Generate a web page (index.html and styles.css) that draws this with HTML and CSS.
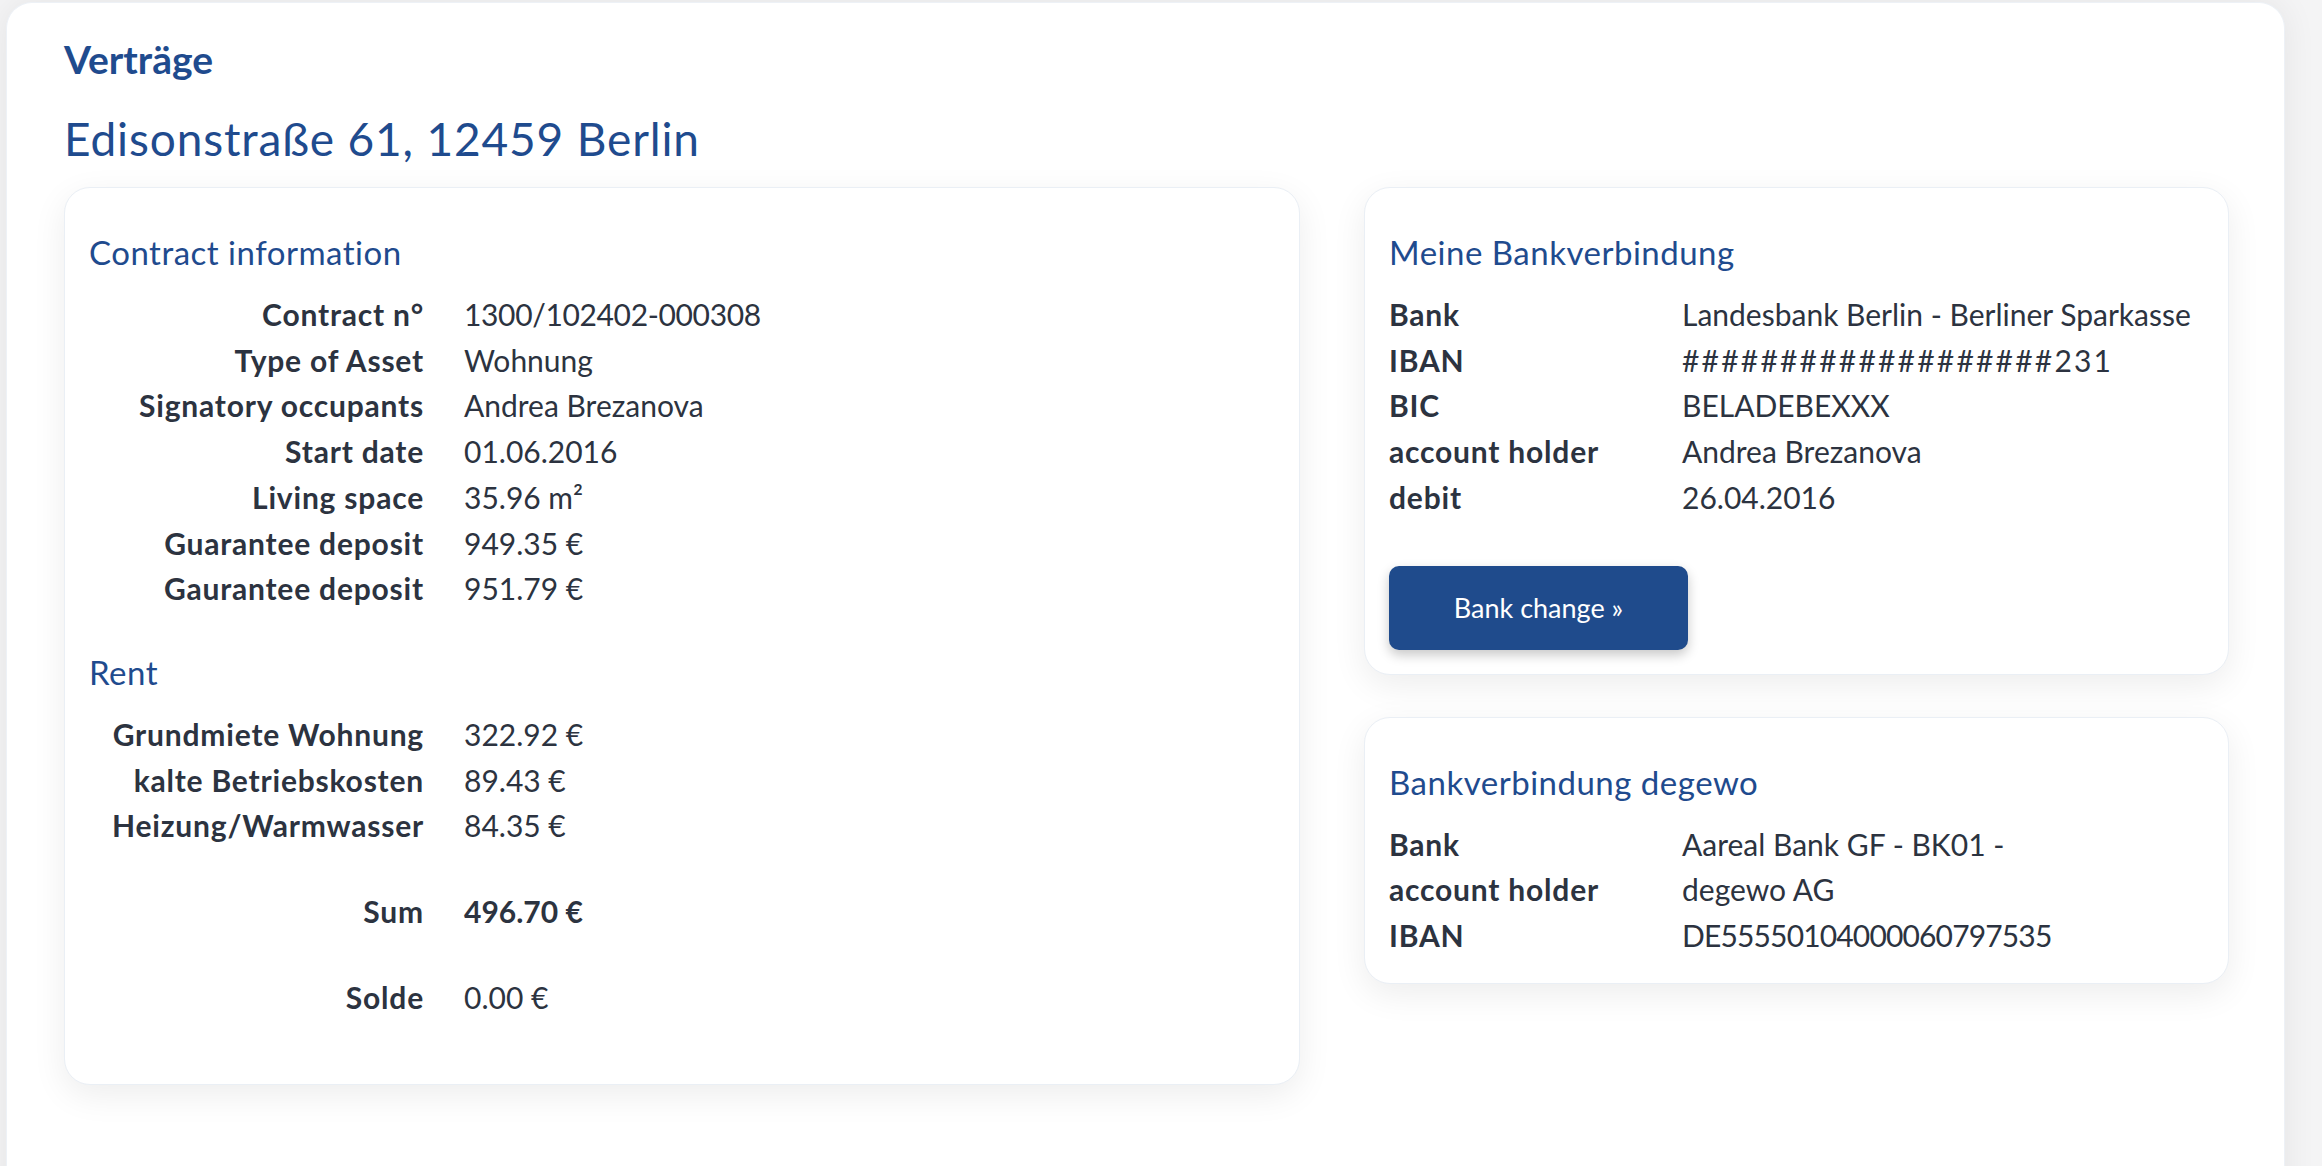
FILE: index.html
```html
<!DOCTYPE html>
<html lang="de">
<head>
<meta charset="utf-8">
<title>Verträge</title>
<link rel="stylesheet" href="styles.css">
</head>
<body>
<div class="page">
  <main class="sheet">
    <h2 class="section-kicker">Verträge</h2>
    <h1 class="address">Edisonstraße 61, 12459 Berlin</h1>
    <div class="layout">
      <section class="card">
        <h3 class="card-title">Contract information</h3>
        <dl class="facts facts-right">
          <dt>Contract n°</dt><dd class="digits">1300/102402-000308</dd>
          <dt>Type of Asset</dt><dd>Wohnung</dd>
          <dt>Signatory occupants</dt><dd>Andrea Brezanova</dd>
          <dt>Start date</dt><dd>01.06.2016</dd>
          <dt>Living space</dt><dd>35.96 m²</dd>
          <dt>Guarantee deposit</dt><dd>949.35 €</dd>
          <dt>Gaurantee deposit</dt><dd>951.79 €</dd>
        </dl>
        <h3 class="card-title spaced">Rent</h3>
        <dl class="facts facts-right">
          <dt>Grundmiete Wohnung</dt><dd>322.92 €</dd>
          <dt>kalte Betriebskosten</dt><dd>89.43 €</dd>
          <dt>Heizung/Warmwasser</dt><dd>84.35 €</dd>
        </dl>
        <dl class="facts facts-right">
          <dt>Sum</dt><dd class="strong">496.70 €</dd>
        </dl>
        <dl class="facts facts-right">
          <dt>Solde</dt><dd>0.00 €</dd>
        </dl>
      </section>
      <div class="side">
        <section class="card card-tight">
          <h3 class="card-title">Meine Bankverbindung</h3>
          <dl class="facts facts-left">
            <dt>Bank</dt><dd>Landesbank Berlin - Berliner Sparkasse</dd>
            <dt>IBAN</dt><dd class="masked">###################231</dd>
            <dt>BIC</dt><dd>BELADEBEXXX</dd>
            <dt>account holder</dt><dd>Andrea Brezanova</dd>
            <dt>debit</dt><dd>26.04.2016</dd>
          </dl>
          <button class="btn-primary" type="button">Bank change »</button>
        </section>
        <section class="card card-tight">
          <h3 class="card-title">Bankverbindung degewo</h3>
          <dl class="facts facts-left">
            <dt>Bank</dt><dd>Aareal Bank GF - BK01 -</dd>
            <dt>account holder</dt><dd>degewo AG</dd>
            <dt>IBAN</dt><dd class="digits tight">DE55550104000060797535</dd>
          </dl>
        </section>
      </div>
    </div>
  </main>
</div>
</body>
</html>
```

FILE: styles.css
```css
* { box-sizing: border-box; }

html, body {
  margin: 0;
  padding: 0;
  background: #f4f4f5;
}

body {
  font-family: "Lato", "Open Sans", sans-serif;
  color: #2c3340;
  overflow: hidden;
}

.page {
  padding: 2px 37px 0 6px;
}

.sheet {
  background: #ffffff;
  border: 1px solid #edf1f6;
  border-bottom: none;
  border-radius: 26px 26px 0 0;
  box-shadow: 0 0 34px rgba(0, 0, 0, 0.07);
  min-height: 1300px;
  padding: 34px 55px 0 57px;
}

.section-kicker {
  margin: 0;
  font-size: 39px;
  line-height: 44px;
  font-weight: 700;
  color: #1f4b8e;
}

.address {
  margin: 31px 0 22px;
  font-size: 46px;
  line-height: 53px;
  font-weight: 400;
  letter-spacing: 0.85px;
  color: #1f4b8e;
}

.layout {
  display: grid;
  grid-template-columns: 1236fr 865fr;
  column-gap: 64px;
  align-items: start;
}

.side {
  display: flex;
  flex-direction: column;
  gap: 42px;
}

.card {
  background: #ffffff;
  border: 1px solid #eaeff5;
  border-radius: 26px;
  box-shadow: 0 10px 34px rgba(0, 0, 0, 0.075);
  padding: 24px 24px 24px 24px;
}

.card-title {
  margin: 20px 0 20px;
  font-size: 33px;
  line-height: 40px;
  font-weight: 400;
  letter-spacing: 0.5px;
  color: #1f4b8e;
}

.card-title.spaced {
  margin-top: 40px;
}

.facts {
  display: grid;
  margin: 0 0 40px;
  font-size: 30px;
  line-height: 45.71px;
}

.facts dt {
  font-weight: 700;
  letter-spacing: 0.8px;
  white-space: nowrap;
}

.facts dd {
  margin: 0;
  white-space: nowrap;
}

.facts dd.masked {
  letter-spacing: 2.2px;
}

.facts dd.digits {
  letter-spacing: -0.35px;
}

.facts dd.digits.tight {
  letter-spacing: -0.85px;
}

.facts-right {
  grid-template-columns: 335px 1fr;
  column-gap: 40px;
}

.facts-right dt {
  text-align: right;
}

.facts-left {
  grid-template-columns: 293px 1fr;
}

.card-tight .facts {
  margin-bottom: 0;
}

.strong {
  font-weight: 700;
}

.btn-primary {
  display: block;
  margin-top: 45px;
  width: 299px;
  height: 84px;
  border: none;
  border-radius: 10px;
  background: #1f4b8c;
  color: #ffffff;
  font-family: "Lato", "Open Sans", sans-serif;
  font-size: 27px;
  box-shadow: 0 5px 12px rgba(0, 0, 0, 0.22);
  cursor: pointer;
}
```
